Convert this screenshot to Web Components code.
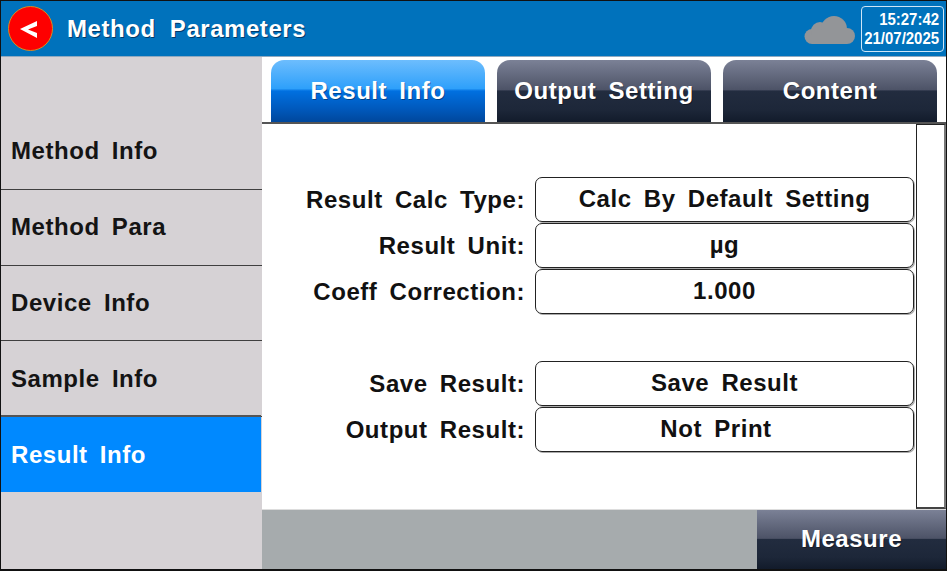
<!DOCTYPE html>
<html>
<head>
<meta charset="utf-8">
<title>Method Parameters</title>
<style>
  html, body { margin: 0; padding: 0; background: #fff; }
  body { width: 948px; height: 572px; overflow: hidden; font: bold 24px "Liberation Sans", Arial, sans-serif; letter-spacing: .55px; }
</style>
</head>
<body>
<method-screen></method-screen>

<script>
class TopBar extends HTMLElement {
  connectedCallback() {
    this.attachShadow({ mode: "open" });
    this.shadowRoot.innerHTML = `
      <style>
        :host {
          display: flex;
          align-items: center;
          height: 55px;
          background: #0072bc;
          border-bottom: 1px solid #8fa9c0;
          color: #fff;
          padding: 0 2px 0 7px;
        }
        .back {
          width: 45px;
          height: 45px;
          box-sizing: border-box;
          border-radius: 50%;
          background: #fe0000;
          border: 1px solid #d98a1e;
          display: flex;
          align-items: center;
          justify-content: center;
        }
        h1 {
          font: inherit;
          margin: 0 0 0 14px;
          flex: 1;
          word-spacing: 7px;
          text-shadow: 1px 1px 0 rgba(0, 20, 50, .6);
        }
        .clock {
          display: flex;
          flex-direction: column;
          align-items: flex-end;
          width: 83px;
          height: 46px;
          box-sizing: border-box;
          border: 1px solid #cfe6f7;
          border-radius: 4px;
          padding: 3px 4px 0 0;
          letter-spacing: 0;
        }
        .clock div {
          font-size: 17px;
          line-height: 19px;
          white-space: nowrap;
          transform: scaleX(.88);
          transform-origin: right;
        }
        svg.cloud { margin: 2px 6px 0 0; }
      </style>
      <div class="back">
        <svg width="24" height="24" viewBox="0 0 24 24"><path d="M1 12 18 4v5l-9 3.5 9 3.5v5Z" fill="#fff"/></svg>
      </div>
      <h1><slot></slot></h1>
      <svg class="cloud" width="51" height="28" viewBox="0 0 51 28" fill="#939598">
        <circle cx="8" cy="20.5" r="7.5"/>
        <circle cx="16" cy="15" r="9"/>
        <circle cx="30" cy="13" r="13"/>
        <circle cx="43" cy="20" r="8"/>
        <rect x="8" y="14" width="35" height="14"/>
      </svg>
      <div class="clock"><div>15:27:42</div><div>21/07/2025</div></div>
    `;
  }
}

class SideItem extends HTMLElement {
  connectedCallback() {
    this.attachShadow({ mode: "open" });
    this.shadowRoot.innerHTML = `
      <style>
        :host {
          display: flex;
          align-items: center;
          box-sizing: border-box;
          height: 75.75px;
          padding-left: 10px;
          border-bottom: 1px solid #3f3f3f;
          color: #141414;
          word-spacing: 5px;
        }
        :host([active]) {
          height: 75px;
          background: #0089ff;
          color: #fff;
          border-bottom: 0;
          margin-right: 1px;
          box-shadow: 0 -2px 0 #555;
        }
      </style>
      <slot></slot>
    `;
  }
}

class SideNav extends HTMLElement {
  connectedCallback() {
    this.attachShadow({ mode: "open" });
    this.shadowRoot.innerHTML = `
      <style>
        :host {
          display: block;
          width: 261px;
          background: #d6d2d5;
          padding-top: 57px;
          box-sizing: border-box;
        }
      </style>
      <slot></slot>
    `;
  }
}

class TabButton extends HTMLElement {
  connectedCallback() {
    this.attachShadow({ mode: "open" });
    this.shadowRoot.innerHTML = `
      <style>
        :host {
          display: flex;
          align-items: center;
          justify-content: center;
          width: 214px;
          height: 62px;
          box-sizing: border-box;
          border-radius: 13px 13px 0 0;
          color: #fff;
          word-spacing: 5px;
          text-shadow: 1px 1px 0 rgba(0, 0, 0, .35);
          background: linear-gradient(#7b8196 0, #4d5367 48%, #222c3f 50%, #1d2739 80%, #121b2b 100%);
        }
        :host([active]) {
          background: linear-gradient(#6dbdfd 0, #2ea0fb 46%, #0070e0 50%, #0058bb 80%, #00479c 100%);
        }
      </style>
      <slot></slot>
    `;
  }
}

class FieldRow extends HTMLElement {
  connectedCallback() {
    this.attachShadow({ mode: "open" });
    this.shadowRoot.innerHTML = `
      <style>
        :host {
          display: flex;
          align-items: flex-start;
          height: 46px;
          color: #111;
          word-spacing: 5px;
        }
        label {
          width: 273px;
          height: 45px;
          line-height: 45px;
          text-align: right;
          padding-right: 10px;
          box-sizing: border-box;
          white-space: nowrap;
        }
        .value {
          width: 379px;
          height: 45px;
          box-sizing: border-box;
          border: 1px solid #222;
          border-radius: 7px;
          box-shadow: 1px 1px 0 #aaa;
          display: flex;
          align-items: center;
          justify-content: center;
          padding-bottom: 1px;
        }
      </style>
      <label>${this.getAttribute("label")}</label>
      <div class="value"><slot></slot></div>
    `;
  }
}

class MethodScreen extends HTMLElement {
  connectedCallback() {
    this.attachShadow({ mode: "open" });
    this.shadowRoot.innerHTML = `
      <style>
        :host {
          display: flex;
          flex-direction: column;
          width: 947px;
          height: 571px;
          box-sizing: border-box;
          border: 1px solid #111;
          border-width: 1px 1px 2px 1px;
          background: #fff;
        }
        .body { flex: 1; display: flex; min-height: 0; }
        .main { flex: 1; display: flex; flex-direction: column; min-width: 0; }
        .tabs {
          display: flex;
          gap: 12px;
          height: 67px;
          box-sizing: border-box;
          padding: 3px 0 0 9px;
          border-bottom: 2px solid #555;
        }
        .content { flex: 1; display: flex; min-height: 0; }
        .form { flex: 1; padding-top: 53px; }
        .scroll {
          width: 30px;
          height: 385px;
          box-sizing: border-box;
          border: 1px solid #222;
          border-right: 2px solid #777;
          border-bottom: 2px solid #444;
        }
        .gap { height: 46px; }
        .shift { padding-right: 17px; }
        .bottom {
          display: flex;
          justify-content: flex-end;
          height: 60px;
          background: #a6abad;
          border-top: 1px solid #ddd;
          box-sizing: border-box;
        }
        .measure {
          width: 189px;
          padding-bottom: 2px;
          box-sizing: border-box;
          display: flex;
          align-items: center;
          justify-content: center;
          color: #fff;
          text-shadow: 1px 1px 0 rgba(0, 0, 0, .35);
          background: linear-gradient(#7b8196 0, #4d5367 48%, #222c3f 50%, #1d2739 80%, #121b2b 100%);
        }
      </style>
      <top-bar>Method Parameters</top-bar>
      <div class="body">
        <side-nav>
          <side-item>Method Info</side-item>
          <side-item>Method Para</side-item>
          <side-item>Device Info</side-item>
          <side-item>Sample Info</side-item>
          <side-item active>Result Info</side-item>
        </side-nav>
        <div class="main">
          <div class="tabs">
            <tab-button active>Result Info</tab-button>
            <tab-button>Output Setting</tab-button>
            <tab-button>Content</tab-button>
          </div>
          <div class="content">
            <div class="form">
              <field-row label="Result Calc Type:">Calc By Default Setting</field-row>
              <field-row label="Result Unit:">µg</field-row>
              <field-row label="Coeff Correction:">1.000</field-row>
              <div class="gap"></div>
              <field-row label="Save Result:">Save Result</field-row>
              <field-row label="Output Result:"><span class="shift">Not Print</span></field-row>
            </div>
            <div class="scroll"></div>
          </div>
          <div class="bottom"><div class="measure">Measure</div></div>
        </div>
      </div>
    `;
  }
}

customElements.define("top-bar", TopBar);
customElements.define("side-item", SideItem);
customElements.define("side-nav", SideNav);
customElements.define("tab-button", TabButton);
customElements.define("field-row", FieldRow);
customElements.define("method-screen", MethodScreen);
</script>
</body>
</html>
